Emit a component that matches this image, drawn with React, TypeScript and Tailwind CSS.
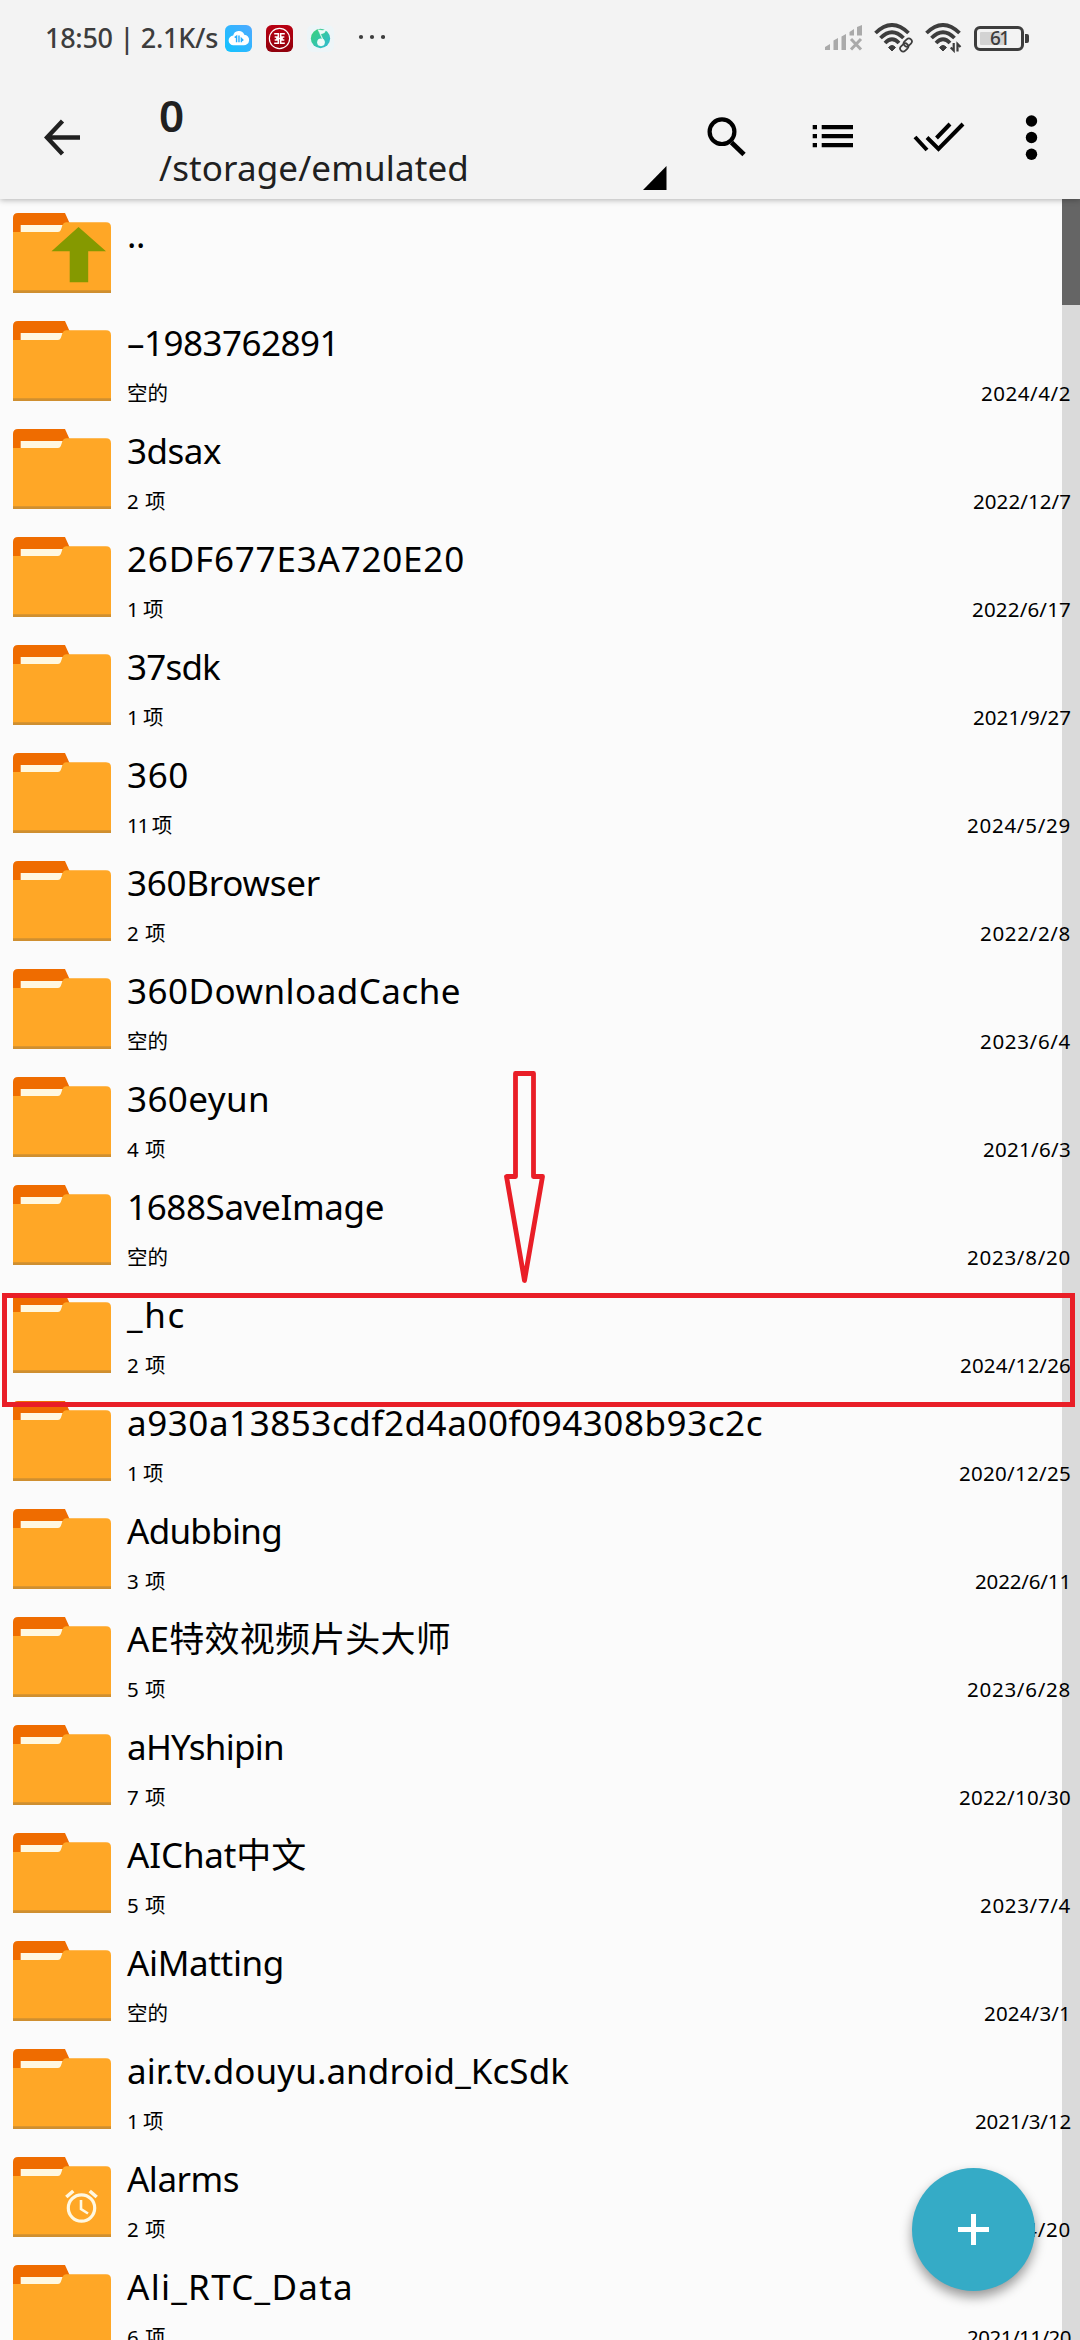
import { useLayoutEffect, useRef, useState } from "react";

type Entry = {
  name: string;
  nameWidth: number;
  info?: string;
  date?: string;
  dateWidth?: number;
  badge?: "up" | "alarm";
};

const ENTRIES: Entry[] = [
  { name: "..", nameWidth: 18, badge: "up" },
  { name: "–1983762891", nameWidth: 212, info: "空的", date: "2024/4/2", dateWidth: 90 },
  { name: "3dsax", nameWidth: 94, info: "2 项", date: "2022/12/7", dateWidth: 98 },
  { name: "26DF677E3A720E20", nameWidth: 338, info: "1 项", date: "2022/6/17", dateWidth: 99 },
  { name: "37sdk", nameWidth: 93, info: "1 项", date: "2021/9/27", dateWidth: 98 },
  { name: "360", nameWidth: 62, info: "11 项", date: "2024/5/29", dateWidth: 104 },
  { name: "360Browser", nameWidth: 193, info: "2 项", date: "2022/2/8", dateWidth: 91 },
  { name: "360DownloadCache", nameWidth: 334, info: "空的", date: "2023/6/4", dateWidth: 91 },
  { name: "360eyun", nameWidth: 143, info: "4 项", date: "2021/6/3", dateWidth: 88 },
  { name: "1688SaveImage", nameWidth: 257, info: "空的", date: "2023/8/20", dateWidth: 104 },
  { name: "_hc", nameWidth: 59, info: "2 项", date: "2024/12/26", dateWidth: 111 },
  { name: "a930a13853cdf2d4a00f094308b93c2c", nameWidth: 636, info: "1 项", date: "2020/12/25", dateWidth: 112 },
  { name: "Adubbing", nameWidth: 155, info: "3 项", date: "2022/6/11", dateWidth: 96 },
  { name: "AE特效视频片头大师", nameWidth: 324, info: "5 项", date: "2023/6/28", dateWidth: 104 },
  { name: "aHYshipin", nameWidth: 157, info: "7 项", date: "2022/10/30", dateWidth: 112 },
  { name: "AIChat中文", nameWidth: 179, info: "5 项", date: "2023/7/4", dateWidth: 91 },
  { name: "AiMatting", nameWidth: 157, info: "空的", date: "2024/3/1", dateWidth: 87 },
  { name: "air.tv.douyu.android_KcSdk", nameWidth: 442, info: "1 项", date: "2021/3/12", dateWidth: 96 },
  { name: "Alarms", nameWidth: 112, info: "2 项", date: "2022/4/20", dateWidth: 104, badge: "alarm" },
  { name: "Ali_RTC_Data", nameWidth: 227, info: "6 项", date: "2021/11/20", dateWidth: 104 },
];

const INFO_WIDTHS: Record<string, number> = { "空的": 41, "1 项": 36, "11 项": 44 };

/** Text whose tracking is adjusted so that it spans the given width. */
function FitText({ text, width, className = "" }: { text: string; width: number; className?: string }) {
  const ref = useRef<HTMLSpanElement>(null);
  const [spacing, setSpacing] = useState(0);
  useLayoutEffect(() => {
    if (ref.current) {
      const natural = ref.current.getBoundingClientRect().width;
      setSpacing((s) => s + (width - natural) / text.length);
    }
  }, [text, width]);
  return (
    <span ref={ref} className={`inline-block whitespace-pre ${className}`} style={{ letterSpacing: `${spacing}px` }}>
      {text}
    </span>
  );
}

function Folder({ badge }: { badge?: "up" | "alarm" }) {
  return (
    <svg className="mt-[14px] h-20 w-[98px] shrink-0" viewBox="0 0 98 80">
      <path d="M0 20V5q0-5 5-5h47l5 11v9z" fill="#ef6c00" />
      <path d="M7.7 12H50l-2 8H7.7z" fill="#fff8e1" />
      <path d="M0 19h45q2 0 2.800-2l1.700-5q1-2.700 3.500-2.700H93q5 0 5 5V80H0z" fill="#ffa726" />
      <path d="M0 77.300h98V80H0z" fill="#cf8f30" />
      {badge === "up" && <path d="M65.500 14 93 38.300H75.200V69.300H56.700V38.300H38.500z" fill="#859900" />}
      {badge === "alarm" && (
        <g fill="none" stroke="#fff8e1" strokeWidth="3.200">
          <circle cx="68.500" cy="51" r="13.200" />
          <path d="M68 43v9l7 4.500" strokeWidth="2.600" />
          <path d="m53.300 40 7-6M83.700 40l-7-6" strokeWidth="3.600" />
        </g>
      )}
    </svg>
  );
}

function Row({ entry }: { entry: Entry }) {
  return (
    <li className="flex h-[108px] shrink-0 pl-[13px] pr-[9px]">
      <Folder badge={entry.badge} />
      <div className="ml-4 flex min-w-0 flex-1 flex-col">
        <div className="mt-[11px] h-[50px] text-[35px] leading-[50px]">
          <FitText text={entry.name} width={entry.nameWidth} />
        </div>
        {entry.info && (
          <div className="mt-[10px] flex h-[30px] items-center justify-between text-[20.500px] leading-[30px]">
            <FitText text={entry.info} width={INFO_WIDTHS[entry.info] ?? 39} />
            <FitText text={entry.date!} width={entry.dateWidth!} />
          </div>
        )}
      </div>
    </li>
  );
}

function Wifi({ kind }: { kind: "link" | "data" }) {
  return (
    <svg className="h-[30px] w-10" viewBox="0 0 40 30" fill="none" stroke="#3d3d3d">
      <path d="M1.500 10Q18 -6 34.500 10" strokeWidth="3.800" />
      <path d="M6.500 15Q18 3.500 29.500 15" strokeWidth="3.800" />
      <path d="M11 20Q18 12.500 25 20" strokeWidth="3.800" />
      <path d="M18 28 14.500 24.500Q18 20.500 21.500 24.500z" fill="#3d3d3d" />
      {kind === "link" ? (
        <g transform="rotate(-45 32 22)" strokeWidth="1.700">
          <rect x="24.500" y="19.500" width="9" height="6" rx="3" />
          <rect x="30.500" y="18.500" width="9" height="6" rx="3" />
        </g>
      ) : (
        <path d="M28.700 20v7.500l-3-3M32.500 28.500V21l3 3" strokeWidth="2.200" />
      )}
    </svg>
  );
}

function StatusBar() {
  return (
    <div className="flex h-[76px] items-center pl-[45px] pr-[51px] text-[#3d3d3d]">
      <FitText text="18:50 | 2.1K/s" width={173} className="text-[27px] font-medium leading-[40px]" />
      <svg className="ml-[7px] h-[27px] w-[27px]" viewBox="0 0 28 28">
        <defs>
          <linearGradient id="cloud" x1="1" y1="0" x2="0" y2="1">
            <stop offset="0" stopColor="#4fa9ff" />
            <stop offset="1" stopColor="#10c4ff" />
          </linearGradient>
        </defs>
        <rect width="28" height="28" rx="6" fill="url(#cloud)" />
        <path d="M9 21a5 5 0 0 1-.5-10 6 6 0 0 1 11.500-1A5.500 5.500 0 0 1 19 21z" fill="#fff" />
        <path d="M10 13l2-1.500V18M14.500 11v7M17 18v-4l2 2" fill="none" stroke="#2aaeff" strokeWidth="1.500" />
      </svg>
      <svg className="ml-[14px] h-[27px] w-[27px]" viewBox="0 0 28 28">
        <defs>
          <linearGradient id="bank" x1="0" y1="0" x2="0" y2="1">
            <stop offset="0" stopColor="#b90012" />
            <stop offset="1" stopColor="#8f000c" />
          </linearGradient>
        </defs>
        <rect width="28" height="28" rx="6" fill="url(#bank)" />
        <g fill="none" stroke="#fff">
          <circle cx="14" cy="14" r="10.500" strokeWidth="1.200" />
          <path
            d="M8.500 9h4.300v3.500H9M8.500 19h4.300v-3.500H9M19.500 9h-4.300v3.500H19M19.500 19h-4.300v-3.500H19M10.500 14h7"
            strokeWidth="1.600"
          />
        </g>
      </svg>
      <svg className="ml-[14px] h-[27px] w-[27px]" viewBox="0 0 28 28">
        <defs>
          <linearGradient id="music" x1="0" y1="0" x2="1" y2="1">
            <stop offset="0" stopColor="#3bd376" />
            <stop offset="1" stopColor="#2fb9d8" />
          </linearGradient>
        </defs>
        <rect width="28" height="28" rx="6" fill="#edf5f8" />
        <circle cx="14" cy="14" r="10" fill="url(#music)" />
        <circle cx="14.500" cy="18" r="4" fill="#eefbf8" />
        <path d="M17.800 17.500 14 9.500l4-1.500 2-3.500-3.500 1.300-5-.8 4.500 9.500" fill="#eefbf8" stroke="#eefbf8" strokeWidth=".6" />
      </svg>
      <svg className="ml-[23px] h-[28px] w-7" viewBox="0 0 28 28" fill="#3d3d3d">
        <circle cx="4" cy="13" r="2.100" />
        <circle cx="15" cy="13" r="2.100" />
        <circle cx="26" cy="13" r="2.100" />
      </svg>
      <div className="flex-1" />
      <svg className="h-[28px] w-10" viewBox="0 0 40 28" fill="#aaa">
        <path d="M1 26v-3l5-3v6zM9.500 26V16.500L14 14v12zM17.500 26V12.500L22 10v16zM25.500 11.500V8L30 5v6.500zM33 11.500v-8.500L38 1v10.500z" />
        <path d="m27 15 10 10.500m0-10.500-10 10.500" stroke="#aaa" strokeWidth="3" />
      </svg>
      <div className="ml-[10px] flex gap-[11px]">
        <Wifi kind="link" />
        <Wifi kind="data" />
      </div>
      <div className="ml-[9px] flex items-center">
        <div className="flex h-[25px] w-[50px] rounded-[6px] border-[3px] border-[#3d3d3d] p-[3px]">
          <div className="relative h-full w-6 rounded-[1px] bg-[#d3d3d3]">
            <span className="absolute left-[10px] top-[-4px] text-[19px] font-medium leading-[21px] tracking-[-1.500px]">61</span>
          </div>
        </div>
        <div className="ml-[1px] h-[9px] w-1 rounded-r-[2px] bg-[#3d3d3d]" />
      </div>
    </div>
  );
}

function Toolbar() {
  return (
    <div className="flex h-[123px] text-[#202020]">
      <svg className="ml-[44px] mt-[43px] h-[37px] w-9 shrink-0" viewBox="0 0 36 37" fill="none" stroke="#202020" strokeWidth="4.400">
        <path d="M36 18.500H3M18.500 2 3 18.500 18.500 35" />
      </svg>
      <div className="ml-[79px] flex w-[484px] shrink-0 flex-col">
        <div className="mt-[14px] h-[50px] text-[44px] font-semibold leading-[50px]">0</div>
        <div className="mt-[3px] h-[50px] text-[35px] leading-[50px]">
          <FitText text="/storage/emulated" width={310} />
        </div>
      </div>
      <svg className="mt-[90px] h-6 w-6 shrink-0" viewBox="0 0 24 24">
        <path d="M23.500 0v24H0z" fill="#000" />
      </svg>
      <svg className="ml-[40px] mt-[41px] h-[40px] w-[39px] shrink-0" viewBox="0 0 39 40" fill="none" stroke="#000">
        <ellipse cx="15" cy="14.700" rx="12.400" ry="12.300" strokeWidth="4.200" />
        <path d="m24.500 25.500 12.500 12" strokeWidth="4.800" />
      </svg>
      <svg className="ml-[66px] mt-[49px] h-6 w-[41px] shrink-0" viewBox="0 0 41 24" fill="#000">
        <path d="M.7 0h4.300v4.300H.7zM9.700 0H41v4.300H9.700zM.7 9H5v4.300H.7zM9.700 9H41v4.300H9.700zM.7 18H5v4.300H.7zM9.700 18H41v4.300H9.700z" />
      </svg>
      <svg className="ml-[60px] mt-[46px] h-[30px] w-[52px] shrink-0" viewBox="0 0 52 30" fill="none" stroke="#000" strokeWidth="4">
        <path d="M2 15 14 28M14 15.500 25.500 27 50 2M23.500 16 37 2" />
      </svg>
      <svg className="ml-[60px] mt-[39px] h-[46px] w-3 shrink-0 overflow-visible" viewBox="0 0 12 46" fill="#000">
        <circle cx="6.500" cy="6" r="5.700" />
        <circle cx="6.500" cy="22.500" r="5.700" />
        <circle cx="6.500" cy="39.300" r="5.700" />
      </svg>
    </div>
  );
}

export default function App() {
  return (
    <div className="relative flex h-[2340px] w-[1080px] flex-col overflow-hidden bg-[#fbfbfb] font-['Noto_Sans','Noto_Sans_CJK_SC',sans-serif] text-black">
      <header className="relative z-10 h-[199px] shrink-0 bg-[#f3f3f3] shadow-[0_1px_6px_rgba(0,0,0,0.3)]">
        <StatusBar />
        <Toolbar />
      </header>
      <main className="relative h-[2141px] overflow-hidden">
        <div className="absolute inset-y-0 right-0 w-[18px] bg-[#dadada]">
          <div className="h-[106px] bg-[#656565]" />
        </div>
        <ul className="relative flex flex-col">
          {ENTRIES.map((entry) => (
            <Row key={entry.name} entry={entry} />
          ))}
        </ul>
      </main>
      <button className="absolute left-[912px] top-[2168px] flex h-[123px] w-[123px] items-center justify-center rounded-full bg-[#35abc6] shadow-[0_6px_12px_rgba(0,0,0,0.4)]">
        <svg className="h-[31px] w-[31px]" viewBox="0 0 31 31" stroke="#fff" strokeWidth="5">
          <path d="M15.500 0v31M0 15.500h31" />
        </svg>
      </button>
      <div className="absolute left-[2px] top-[1293px] z-20 h-[114px] w-[1073px] border-[5px] border-[#e91e27]" />
      <svg className="absolute left-[500px] top-[1066px] z-20 h-[220px] w-[50px]" viewBox="500 1066 50 220">
        <path
          d="M515.500 1176.500V1073.500H533.500V1176.500H542.500L524.500 1280.500 506.500 1176.500z"
          fill="none"
          stroke="#e91e27"
          strokeWidth="4.800"
          strokeLinejoin="round"
        />
      </svg>
    </div>
  );
}
